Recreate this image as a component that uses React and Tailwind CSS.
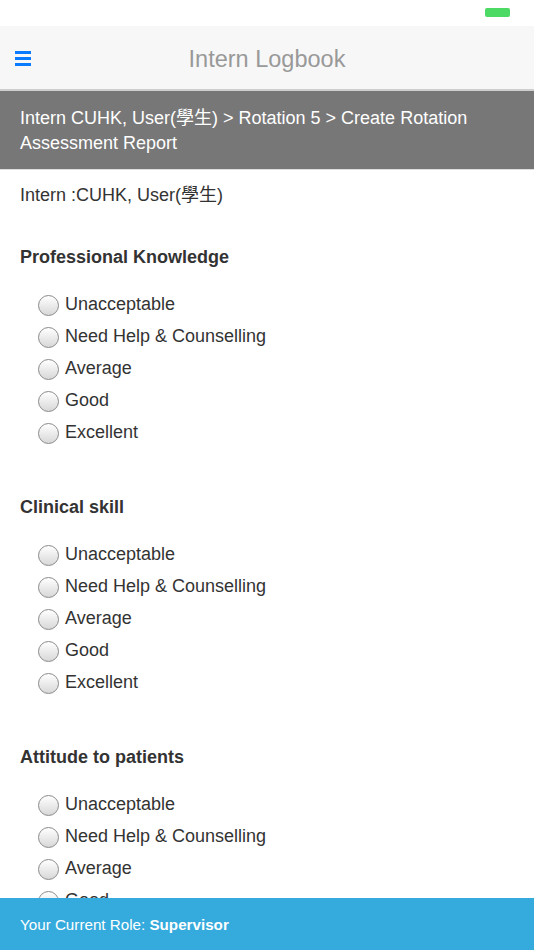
const OPTIONS = ['Unacceptable', 'Need Help & Counselling', 'Average', 'Good', 'Excellent']

const SECTIONS = ['Professional Knowledge', 'Clinical skill', 'Attitude to patients', 'Communication skill']

function Radio({ label }) {
  return (
    <label className="flex items-center h-[32px]">
      <span className="w-[21px] h-[21px] rounded-full border border-[#8a8a8a] bg-gradient-to-b from-white to-[#d8d8d8] shrink-0 mt-[3px]" />
      <span className="ml-[6px]">{label}</span>
    </label>
  )
}

export default function App() {
  return (
    <div
      className="h-[950px] w-[534px] flex flex-col overflow-hidden bg-white text-[#333]"
      style={{ fontFamily: '"Liberation Sans", "Noto Sans CJK TC", Arial, sans-serif' }}
    >
      <div className="h-[26px] bg-white flex justify-end shrink-0">
        <div className="w-[25px] h-[9px] mt-[8px] mr-[24px] rounded-[2px] bg-[#4cd964]" />
      </div>
      <div className="h-[65px] bg-[#f7f7f7] border-b-2 border-[#cfcfcf] flex items-center relative shrink-0">
        <div className="absolute left-[15px] top-[25px] flex flex-col gap-[3px]">
          <div className="w-[16px] h-[3px] bg-[#0a7aff]" />
          <div className="w-[16px] h-[3px] bg-[#0a7aff]" />
          <div className="w-[16px] h-[3px] bg-[#0a7aff]" />
        </div>
        <div className="flex-1 text-center text-[23.5px] text-[#999] pt-[4px]">Intern Logbook</div>
      </div>
      <div className="bg-[#777] text-white text-[18px] leading-[25px] px-[20px] pt-[15px] pb-[13px] border-b border-[#ddd] shrink-0">
        Intern CUHK, User(學生) &gt; Rotation 5 &gt; Create Rotation Assessment Report
      </div>
      <div className="flex-1 overflow-hidden px-[20px] text-[18px] leading-[25px]">
        <div className="pt-[13px]">Intern :CUHK, User(學生)</div>
        {SECTIONS.map((s) => (
          <div key={s} className="pt-[37px]">
            <div className="font-bold">{s}</div>
            <div className="pt-[18px] pl-[18px] pb-[10px]">
              {OPTIONS.map((o) => (
                <Radio key={o} label={o} />
              ))}
            </div>
          </div>
        ))}
      </div>
      <div className="h-[52px] bg-[#35aadc] text-white text-[15.2px] flex items-center px-[20px] pt-[3px] shrink-0">
        Your Current Role:&nbsp;<span className="font-bold">Supervisor</span>
      </div>
    </div>
  )
}
